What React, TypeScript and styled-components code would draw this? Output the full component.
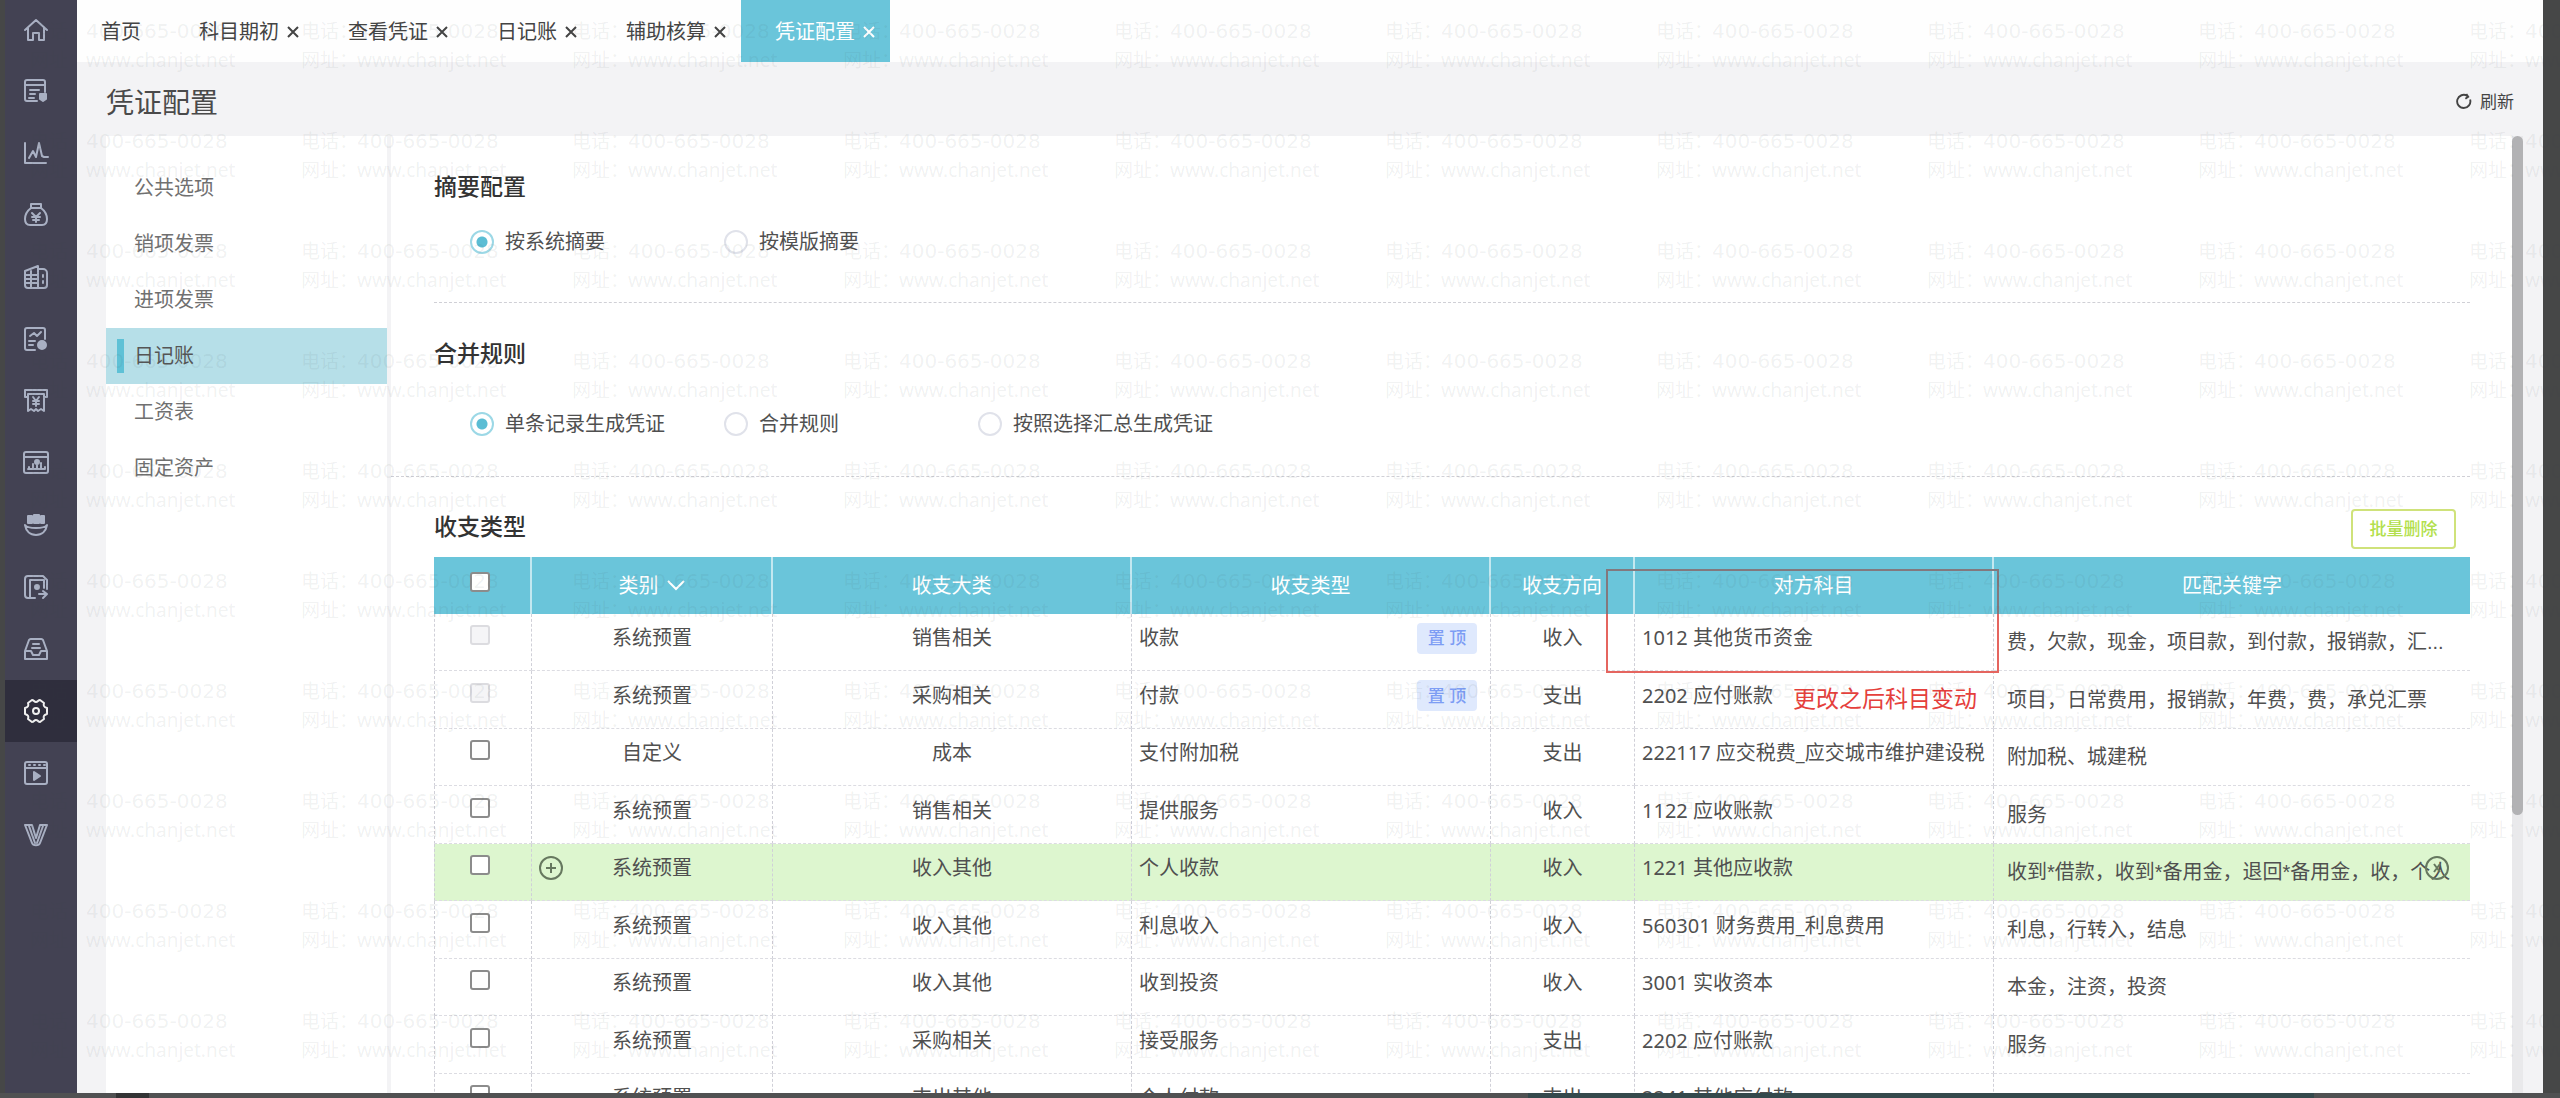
import React, { useState } from "react";
import styled, { createGlobalStyle, css } from "styled-components";

const GlobalStyle = createGlobalStyle`
  *, *::before, *::after { box-sizing: border-box; }
  body {
    margin: 0;
    font-family: "Noto Sans", "Noto Sans CJK SC", sans-serif;
    font-size: 20px;
    line-height: 28px;
    color: #505050;
  }
  button, input { font: inherit; color: inherit; }
  button { background: none; border: 0; padding: 0; cursor: pointer; }
`;

const teal = "#6ac5da";

const Screen = styled.div`
  position: relative;
  height: 100vh;
  display: flex;
  flex-direction: column;
  overflow: hidden;
  background: #464747;
`;

const Window = styled.div`
  flex: 1;
  min-height: 0;
  display: flex;
  padding: 0 17px 0 5px;
`;

const TaskStrip = styled.div`
  height: 5px;
  flex: none;
  display: grid;
  grid-template-columns: 116px 33px 1fr 786px 246px;
  background: #505152;
`;

const StripPart = styled.span<{ $color: string }>`
  background: ${(p) => p.$color};
`;

const Sidebar = styled.nav`
  width: 72px;
  flex: none;
  display: flex;
  flex-direction: column;
  background: #434253;
`;

const SideButton = styled.button<{ $active?: boolean }>`
  height: 62px;
  padding-left: 18px;
  display: flex;
  align-items: center;
  color: ${(p) => (p.$active ? "#f1f1f1" : "#a9b0c3")};
  background: ${(p) => (p.$active ? "#2f2e3d" : "transparent")};
  &:first-child { height: 60px; }
  svg {
    width: 26px;
    height: 26px;
    fill: none;
    stroke: currentColor;
    stroke-width: 2;
    stroke-linejoin: round;
    stroke-linecap: round;
  }
`;

const Workspace = styled.div`
  flex: 1;
  min-width: 0;
  display: flex;
  flex-direction: column;
  background: #f3f3f5;
`;

const TabBar = styled.div`
  height: 62px;
  flex: none;
  display: flex;
  background: #fefefe;
`;

const Tab = styled.div<{ $active?: boolean; $fixed?: boolean }>`
  display: flex;
  align-items: center;
  gap: 8px;
  padding: ${(p) => (p.$fixed ? "2px 24px 0" : "2px 15px 0 34px")};
  color: ${(p) => (p.$active ? "#fff" : "#444")};
  background: ${(p) => (p.$active ? teal : "transparent")};
`;

const CloseButton = styled.button`
  width: 12px;
  height: 12px;
  display: flex;
  svg { width: 12px; height: 12px; stroke: currentColor; stroke-width: 2; }
`;

const PageHeader = styled.header`
  height: 74px;
  flex: none;
  padding: 5px 29px 0;
  display: flex;
  align-items: center;
  justify-content: space-between;
`;

const PageTitle = styled.h1`
  margin: 0;
  font-size: 28px;
  line-height: 40px;
  font-weight: 400;
  color: #4a4a4a;
`;

const RefreshButton = styled.button`
  display: flex;
  align-items: center;
  gap: 8px;
  font-size: 17px;
  color: #444;
  svg { width: 17px; height: 17px; fill: none; stroke: currentColor; stroke-width: 2; }
`;

const Body = styled.div`
  flex: 1;
  min-height: 0;
  display: flex;
  padding: 0 20px 0 29px;
`;

const CategoryNav = styled.nav`
  width: 281px;
  flex: none;
  padding-top: 24px;
  display: flex;
  flex-direction: column;
  background: #fff;
`;

const CategoryButton = styled.button<{ $active?: boolean }>`
  height: 56px;
  padding-left: 11px;
  display: flex;
  align-items: center;
  gap: 10px;
  color: ${(p) => (p.$active ? "#555" : "#707070")};
  background: ${(p) => (p.$active ? "#b6dfe8" : "transparent")};
  &::before {
    content: "";
    width: 7px;
    height: 34px;
    background: ${(p) => (p.$active ? "#5ec1d6" : "transparent")};
  }
`;

const Main = styled.main`
  flex: 1;
  min-width: 0;
  margin-left: 4px;
  overflow: hidden;
  background: #fff;
`;

const ScrollTrack = styled.div`
  width: 11px;
  flex: none;
  background: #e9e9eb;
`;

const ScrollThumb = styled.div`
  height: 71%;
  border-radius: 6px;
  background: #b2b2b4;
`;

const Section = styled.section<{ $bottom: number }>`
  margin-right: 42px;
  padding: 33px 0 ${(p) => p.$bottom}px 43px;
  border-bottom: 1px dashed #d0d0d6;
`;

const InsetSection = styled(Section)`
  margin-left: 43px;
  padding-left: 0;
`;

const ListSection = styled.section`
  padding: 32px 42px 0 43px;
`;

const SectionTitle = styled.h2`
  margin: 0;
  font-size: 23px;
  line-height: 34px;
  font-weight: 500;
  color: #333;
`;

const RadioGroup = styled.div<{ $top: number }>`
  margin-top: ${(p) => p.$top}px;
  padding-left: 36px;
  display: grid;
  grid-template-columns: repeat(3, 254px);
  line-height: 24px;
`;

const RadioLabel = styled.label`
  height: 24px;
  display: flex;
  align-items: center;
  gap: 11px;
  white-space: nowrap;
`;

const Radio = styled.input`
  appearance: none;
  width: 24px;
  height: 24px;
  flex: none;
  margin: 0;
  border: 2px solid #e0e2ea;
  border-radius: 50%;
  background: #fff;
  &:checked {
    border-color: #9cd8e6;
    background: radial-gradient(circle, #5bbdd4 5px, #fff 6px);
  }
`;

const ListHead = styled.div`
  display: flex;
  justify-content: space-between;
  align-items: flex-start;
  padding-right: 14px;
`;

const DeleteButton = styled.button`
  width: 105px;
  height: 40px;
  border: 2px solid #cfe27a;
  border-radius: 4px;
  font-size: 17px;
  font-weight: 500;
  color: #b3df4d;
  background: #fff;
`;

const TableWrap = styled.div`
  position: relative;
  margin-top: 8px;
`;

const Table = styled.table`
  width: 100%;
  table-layout: fixed;
  border-collapse: separate;
  border-spacing: 0;
`;

const HeadCell = styled.th`
  height: 57px;
  padding: 0;
  font-weight: 400;
  color: #fff;
  background: ${teal};
  border-right: 2px solid #c3e8f0;
  &:last-child { border-right: 0; }
`;

const SortButton = styled.button`
  display: inline-flex;
  align-items: center;
  gap: 8px;
  svg { width: 18px; height: 11px; fill: none; stroke: currentColor; stroke-width: 2; }
`;

const Row = styled.tr<{ $hover?: boolean }>`
  height: 57px;
  &:nth-child(even) { height: 58px; }
  background: ${(p) => (p.$hover ? "#ddf6cf" : "transparent")};
`;

const cellBorder = css`
  border-right: 1px dashed #d0d0d8;
  border-bottom: 1px dashed #dcdce2;
`;

const Cell = styled.td<{ $left?: boolean }>`
  ${cellBorder}
  position: relative;
  padding: 0 7px 8px;
  text-align: ${(p) => (p.$left ? "left" : "center")};
  white-space: nowrap;
`;

const CheckCell = styled(Cell)`
  border-left: 1px dashed #d0d0d8;
  padding: 0 6px 14px 0;
  line-height: 20px;
`;

const KeywordCell = styled(Cell)`
  padding: 0 0 0 13px;
  border-right: 0;
  font-family: "Liberation Sans", "Noto Sans CJK SC", sans-serif;
`;

const CheckBox = styled.input`
  appearance: none;
  display: block;
  width: 20px;
  height: 20px;
  margin: 0 auto;
  border: 2px solid #8c8c8c;
  border-radius: 3px;
  background: #fff;
  &:disabled { border-color: #dcdce0; background: #f5f5f7; }
`;

const HeadCheck = styled.div`
  padding: 0 5px 7px 0;
`;

const TypeLine = styled.div`
  display: flex;
  justify-content: space-between;
  align-items: center;
  padding-right: 6px;
`;

const PinButton = styled.button`
  width: 60px;
  height: 31px;
  border-radius: 4px;
  font-size: 17px;
  font-weight: 500;
  color: #7d9df4;
  background: #dfe9fd;
`;

const RowAction = styled.button<{ $side: "left" | "right" }>`
  position: absolute;
  top: 12px;
  ${(p) => (p.$side === "left" ? "left: 7px;" : "right: 21px;")}
  width: 24px;
  height: 24px;
  color: #66785f;
  svg { display: block; width: 24px; height: 24px; fill: none; stroke: currentColor; stroke-width: 2; }
`;

const MarkBox = styled.div`
  position: absolute;
  top: 12px;
  left: 1172px;
  width: 393px;
  height: 104px;
  border: 2px solid;
  border-image: linear-gradient(#83787d 45px, #e5655f 45px) 2;
  pointer-events: none;
`;

const MarkNote = styled.p`
  position: absolute;
  top: 124px;
  left: 1359px;
  margin: 0;
  font-size: 23px;
  line-height: 34px;
  color: #e5403c;
  white-space: nowrap;
`;

const Watermark = styled.div`
  position: absolute;
  inset: 0 0 5px 0;
  padding: 17px 0 0 30px;
  overflow: hidden;
  pointer-events: none;
  display: grid;
  grid-template-columns: repeat(10, 271px);
  grid-auto-rows: 110px;
  color: rgba(60, 70, 75, 0.08);
  font-size: 19px;
  line-height: 29px;
`;

const WatermarkItem = styled.div`
  display: grid;
  grid-template-columns: 56px 1fr;
  align-content: start;
  white-space: nowrap;
`;

const WatermarkPhone = styled.span`
  font-family: "DejaVu Sans", sans-serif;
  font-size: 20px;
`;

const icons: { name: string; art: React.ReactNode }[] = [
  { name: "首页", art: <path d="M2 13 13 3l11 10M5 11v12h5v-7h6v7h5V11" /> },
  {
    name: "单据",
    art: (
      <>
        <path d="M22 14V4a2 2 0 0 0-2-2H4a2 2 0 0 0-2 2v17a2 2 0 0 0 2 2h10M2 7h20M7 12h9M7 16h5M6 20h5" />
        <path d="M17 16h6v5l-3 2-3-2z" fill="currentColor" />
      </>
    ),
  },
  { name: "报表", art: <path d="M2 3v20h21M6 18l4-7 3 6 3-14 3 13 2 1h4" /> },
  {
    name: "资金",
    art: (
      <>
        <path d="M8 2h10v4H8zM8 6C4 9 2 13 2 17c0 4 2 6 5 6h12c3 0 5-2 5-6 0-4-2-8-6-11" />
        <path d="m9 11 4 4 4-4M13 15v5M9 15h8M10 18h6" />
      </>
    ),
  },
  {
    name: "资产",
    art: (
      <>
        <path d="M2 7 15 2v22H5a3 3 0 0 1-3-3zM15 5h5a4 4 0 0 1 4 4v12a3 3 0 0 1-3 3h-6" />
        <path d="M2 11h13M2 15h13M2 19h13M8 7v16M20 11v2M20 17v2" />
      </>
    ),
  },
  {
    name: "发票",
    art: (
      <>
        <path d="M22 13V4a2 2 0 0 0-2-2H4a2 2 0 0 0-2 2v18a2 2 0 0 0 2 2h8M7 10l4-3 3 3 4-4M6 15h6M6 19h4" />
        <circle cx="19" cy="19" r="4" fill="currentColor" />
      </>
    ),
  },
  {
    name: "工资",
    art: (
      <>
        <path d="M5 9H2V2h22v7h-3M5 6h16M5 6v17l3-2 3 2 2-2 2 2 3-2 3 2V6" />
        <path d="m10 9 3 4 3-4M13 13v5M10 13h6M10 16h6" />
      </>
    ),
  },
  {
    name: "分析",
    art: (
      <>
        <rect x="1" y="2" width="24" height="21" rx="2" />
        <path d="M1 7h24M6 19v-2M10 19v-5M18 19v-6M22 19v-2M5 19h17" />
        <circle cx="14" cy="12" r="2" fill="currentColor" />
        <path d="M14 13v6" />
      </>
    ),
  },
  {
    name: "税务",
    art: (
      <>
        <path d="M5 4h4v7H5zM11 3h5v8h-5zM18 4h3v7h-3z" fill="currentColor" />
        <path d="M2 13c3 4 19 4 22 0-1 6-5 10-11 10S3 19 2 13z" />
      </>
    ),
  },
  {
    name: "账套",
    art: (
      <>
        <path d="M24 15V6l-4-4H5a3 3 0 0 0-3 3v16a3 3 0 0 0 3 3h7M7 24V6h14v8M16 20h7M20 17l4 3-4 4" />
        <circle cx="14" cy="13" r="2" fill="currentColor" />
      </>
    ),
  },
  { name: "归档", art: <path d="M2 15v8h22v-8L20 4a2 2 0 0 0-2-1H8a2 2 0 0 0-2 1L2 15h6l2 4h6l2-4h6M10 8h6M9 12h8" /> },
  {
    name: "设置",
    art: (
      <>
        <path d="M9 2c2 0 2 2 4 2s2-2 4-2l4 3c-1 3 0 4 3 5v6c-3 1-4 2-3 5l-4 3c-2 0-2-2-4-2s-2 2-4 2l-4-3c1-3 0-4-3-5v-6c3-1 4-2 3-5z" />
        <circle cx="13" cy="13" r="3" />
      </>
    ),
  },
  {
    name: "视频",
    art: (
      <>
        <rect x="2" y="2" width="22" height="22" rx="2" />
        <path d="M2 8h22M6 5h1M11 5h1M16 5h1M21 5h1" />
        <path d="m11 12 6 4-6 4z" fill="currentColor" />
      </>
    ),
  },
  { name: "会员", art: <path d="M2 3h7l4 13 4-13h7l-7 18c-1 3-7 3-8 0zM6 4l6 17M20 4l-6 17" /> },
];

const tabs = ["首页", "科目期初", "查看凭证", "日记账", "辅助核算", "凭证配置"];
const categories = ["公共选项", "销项发票", "进项发票", "日记账", "工资表", "固定资产"];

interface Entry {
  source: string;
  group: string;
  type: string;
  pinned?: boolean;
  hover?: boolean;
  direction: string;
  account: string;
  keywords: string;
}

const entries: Entry[] = [
  { source: "系统预置", group: "销售相关", type: "收款", pinned: true, direction: "收入", account: "1012 其他货币资金", keywords: "费，欠款，现金，项目款，到付款，报销款，汇..." },
  { source: "系统预置", group: "采购相关", type: "付款", pinned: true, direction: "支出", account: "2202 应付账款", keywords: "项目，日常费用，报销款，年费，费，承兑汇票" },
  { source: "自定义", group: "成本", type: "支付附加税", direction: "支出", account: "222117 应交税费_应交城市维护建设税", keywords: "附加税、城建税" },
  { source: "系统预置", group: "销售相关", type: "提供服务", direction: "收入", account: "1122 应收账款", keywords: "服务" },
  { source: "系统预置", group: "收入其他", type: "个人收款", hover: true, direction: "收入", account: "1221 其他应收款", keywords: "收到*借款，收到*备用金，退回*备用金，收，个人" },
  { source: "系统预置", group: "收入其他", type: "利息收入", direction: "收入", account: "560301 财务费用_利息费用", keywords: "利息，行转入，结息" },
  { source: "系统预置", group: "收入其他", type: "收到投资", direction: "收入", account: "3001 实收资本", keywords: "本金，注资，投资" },
  { source: "系统预置", group: "采购相关", type: "接受服务", direction: "支出", account: "2202 应付账款", keywords: "服务" },
  { source: "系统预置", group: "支出其他", type: "个人付款", direction: "支出", account: "2241 其他应付款", keywords: "" },
];

const CloseIcon = () => (
  <svg viewBox="0 0 12 12"><path d="m1 1 10 10M11 1 1 11" /></svg>
);

function RadioSet({ name, options, top }: { name: string; options: string[]; top: number }) {
  const [value, setValue] = useState(options[0]);
  return (
    <RadioGroup $top={top} role="radiogroup">
      {options.map((option) => (
        <RadioLabel key={option}>
          <Radio type="radio" name={name} checked={value === option} onChange={() => setValue(option)} />
          {option}
        </RadioLabel>
      ))}
    </RadioGroup>
  );
}

function EntryRow({ entry }: { entry: Entry }) {
  return (
    <Row $hover={entry.hover}>
      <CheckCell>
        <CheckBox type="checkbox" disabled={entry.pinned} aria-label={entry.type} />
      </CheckCell>
      <Cell>
        {entry.hover && (
          <RowAction $side="left" aria-label="新增">
            <svg viewBox="0 0 24 24"><circle cx="12" cy="12" r="11" /><path d="M12 7v10M7 12h10" /></svg>
          </RowAction>
        )}
        {entry.source}
      </Cell>
      <Cell>{entry.group}</Cell>
      <Cell $left>
        <TypeLine>
          {entry.type}
          {entry.pinned && <PinButton>置 顶</PinButton>}
        </TypeLine>
      </Cell>
      <Cell>{entry.direction}</Cell>
      <Cell $left>{entry.account}</Cell>
      <KeywordCell $left>
        {entry.keywords}
        {entry.hover && (
          <RowAction $side="right" aria-label="删除">
            <svg viewBox="0 0 24 24"><circle cx="12" cy="12" r="11" /><path d="m9 8 6 8M15 8l-6 8" /></svg>
          </RowAction>
        )}
      </KeywordCell>
    </Row>
  );
}

export default function App() {
  return (
    <>
      <GlobalStyle />
      <Screen>
        <Window>
          <Sidebar>
            {icons.map((icon) => (
              <SideButton key={icon.name} $active={icon.name === "设置"} aria-label={icon.name}>
                <svg viewBox="0 0 26 26">{icon.art}</svg>
              </SideButton>
            ))}
          </Sidebar>
          <Workspace>
            <TabBar>
              {tabs.map((tab, i) => (
                <Tab key={tab} $fixed={i === 0} $active={i === tabs.length - 1}>
                  <button>{tab}</button>
                  {i > 0 && <CloseButton aria-label="关闭"><CloseIcon /></CloseButton>}
                </Tab>
              ))}
            </TabBar>
            <PageHeader>
              <PageTitle>凭证配置</PageTitle>
              <RefreshButton>
                <svg viewBox="0 0 18 18"><path d="M13 3a7 7 0 1 0 3 4M12 1l2 3-3 2" /></svg>
                刷新
              </RefreshButton>
            </PageHeader>
            <Body>
              <CategoryNav>
                {categories.map((category) => (
                  <CategoryButton key={category} $active={category === "日记账"}>{category}</CategoryButton>
                ))}
              </CategoryNav>
              <Main>
                <InsetSection $bottom={48}>
                  <SectionTitle>摘要配置</SectionTitle>
                  <RadioSet name="summary" top={27} options={["按系统摘要", "按模版摘要"]} />
                </InsetSection>
                <Section $bottom={40}>
                  <SectionTitle>合并规则</SectionTitle>
                  <RadioSet name="merge" top={42} options={["单条记录生成凭证", "合并规则", "按照选择汇总生成凭证"]} />
                </Section>
                <ListSection>
                  <ListHead>
                    <SectionTitle>收支类型</SectionTitle>
                    <DeleteButton>批量删除</DeleteButton>
                  </ListHead>
                  <TableWrap>
                    <Table>
                      <colgroup>
                        <col width="98" />
                        <col width="241" />
                        <col width="359" />
                        <col width="359" />
                        <col width="144" />
                        <col width="359" />
                        <col />
                      </colgroup>
                      <thead>
                        <tr>
                          <HeadCell>
                            <HeadCheck><CheckBox type="checkbox" aria-label="全选" /></HeadCheck>
                          </HeadCell>
                          <HeadCell>
                            <SortButton>
                              类别
                              <svg viewBox="0 0 18 11"><path d="m1 1 8 8 8-8" /></svg>
                            </SortButton>
                          </HeadCell>
                          <HeadCell>收支大类</HeadCell>
                          <HeadCell>收支类型</HeadCell>
                          <HeadCell>收支方向</HeadCell>
                          <HeadCell>对方科目</HeadCell>
                          <HeadCell>匹配关键字</HeadCell>
                        </tr>
                      </thead>
                      <tbody>
                        {entries.map((entry, i) => <EntryRow key={i} entry={entry} />)}
                      </tbody>
                    </Table>
                    <MarkBox />
                    <MarkNote>更改之后科目变动</MarkNote>
                  </TableWrap>
                </ListSection>
              </Main>
              <ScrollTrack><ScrollThumb /></ScrollTrack>
            </Body>
          </Workspace>
        </Window>
        <TaskStrip>
          <span />
          <StripPart $color="#333435" />
          <span />
          <StripPart $color="#35494c" />
          <span />
        </TaskStrip>
        <Watermark aria-hidden="true">
          {Array.from({ length: 100 }, (_, i) => (
            <WatermarkItem key={i}>
              <span>电话：</span>
              <WatermarkPhone>400-665-0028</WatermarkPhone>
              <span>网址：</span>
              <span>www.chanjet.net</span>
            </WatermarkItem>
          ))}
        </Watermark>
      </Screen>
    </>
  );
}
